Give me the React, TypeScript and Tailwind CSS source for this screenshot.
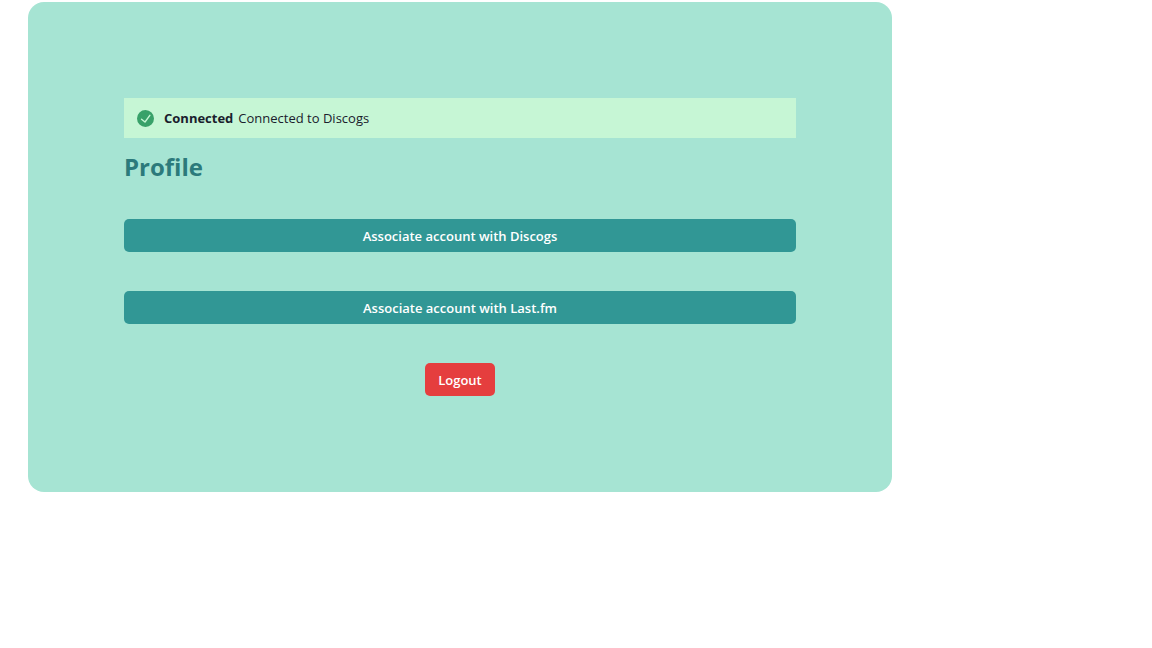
import React from "react";

type ActionButtonProps = {
  children: React.ReactNode;
  className: string;
};

function CheckCircle() {
  return (
    <svg viewBox="0 0 24 24" aria-hidden="true" className="h-[17px] w-[17px] shrink-0 text-[#38a169]">
      <path
        fill="currentColor"
        d="M12,0A12,12,0,1,0,24,12,12.014,12.014,0,0,0,12,0Zm6.927,8.2-6.845,9.289a1.011,1.011,0,0,1-1.43.188L5.764,13.769a1,1,0,1,1,1.25-1.562l4.076,3.261,6.227-8.451A1,1,0,1,1,18.927,8.2Z"
      />
    </svg>
  );
}

function ActionButton({ children, className }: ActionButtonProps) {
  return (
    <button
      type="button"
      className={`h-[33px] rounded-[5px] px-[13px] pt-0.5 text-[13px] font-semibold text-white ${className}`}
    >
      {children}
    </button>
  );
}

export default function App() {
  return (
    <div className="min-h-screen bg-white pt-0.5 pl-7 font-['Open_Sans','Noto_Sans',sans-serif] text-[#1a202c]">
      <main className="mr-[260px] flex flex-col rounded-2xl bg-[#a6e4d3] p-24">
        <div role="status" className="flex h-10 items-center bg-[#c6f6d5] px-[13px] text-[13px]">
          <CheckCircle />
          <p className="ml-2.5 flex gap-[5px] pt-0.5">
            <strong className="font-bold">Connected</strong>
            <span>Connected to Discogs</span>
          </p>
        </div>
        <h1 className="mt-3 text-[24px] leading-[34px] font-bold text-[#2c7a7b]">Profile</h1>
        <div className="mt-[35px] flex flex-col gap-[39px]">
          <ActionButton className="bg-[#319795]">Associate account with Discogs</ActionButton>
          <ActionButton className="bg-[#319795]">Associate account with Last.fm</ActionButton>
          <ActionButton className="self-center bg-[#e53e3e]">Logout</ActionButton>
        </div>
      </main>
    </div>
  );
}
